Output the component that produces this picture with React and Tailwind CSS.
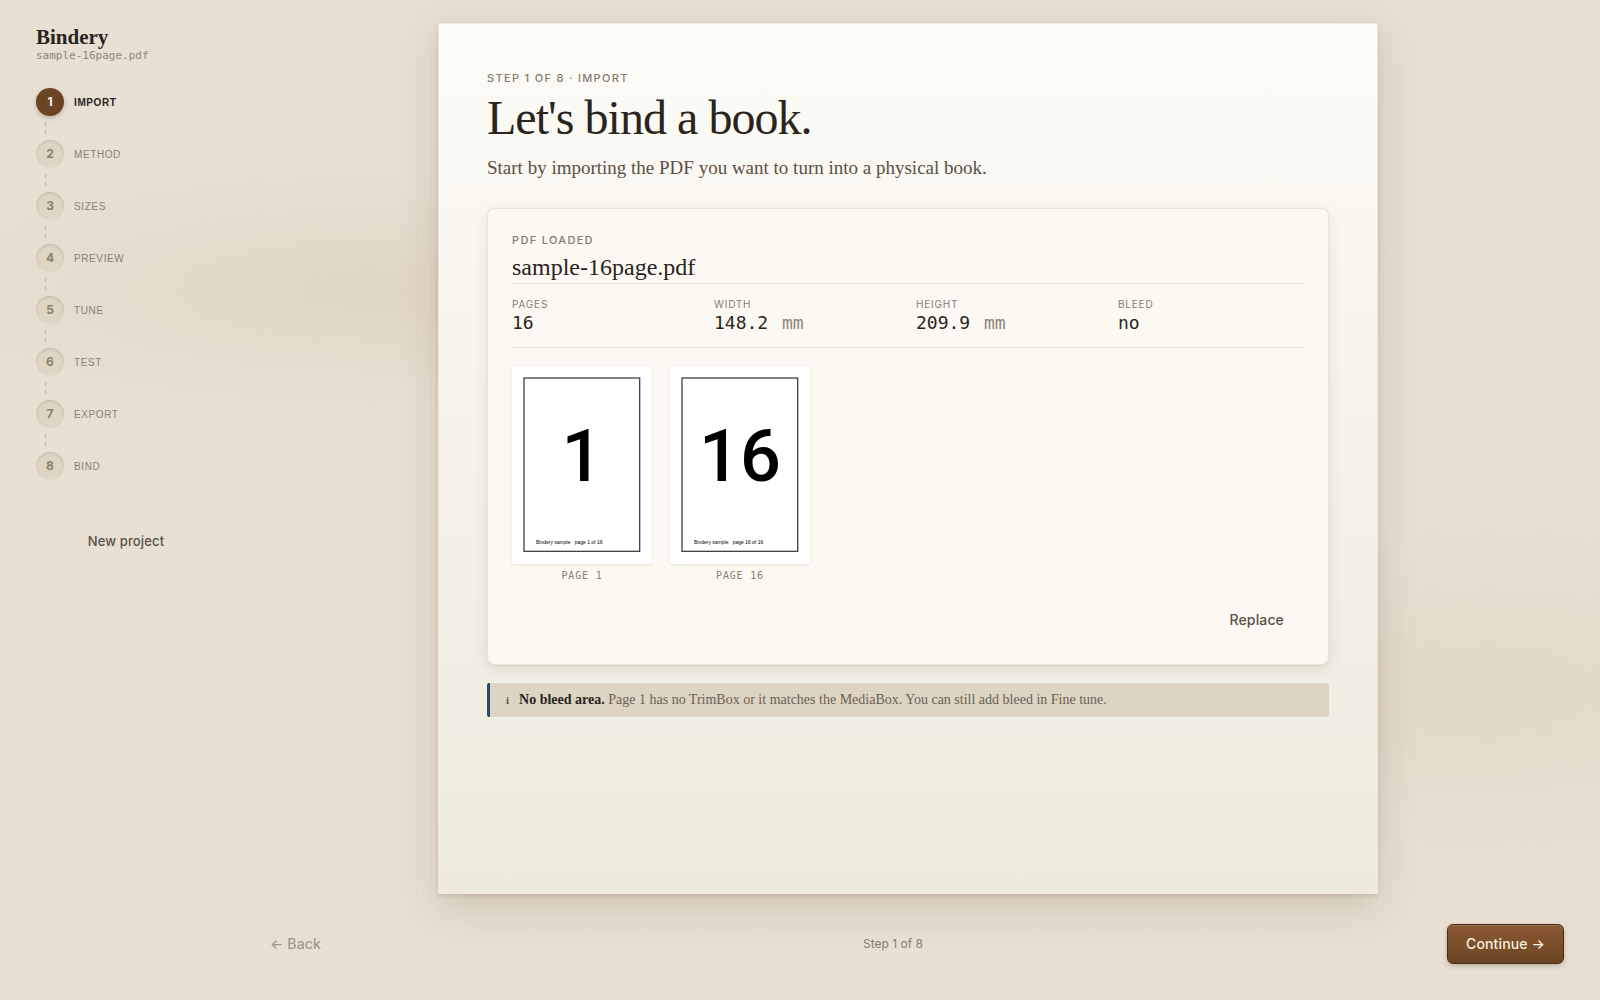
import { useState } from 'react';

const steps = ['Import', 'Method', 'Sizes', 'Preview', 'Tune', 'Test', 'Export', 'Bind'];

const project = {
  name: 'sample-16page.pdf',
  pages: 16,
};

const facts = [
  { label: 'Pages', value: '16' },
  { label: 'Width', value: '148.2', unit: 'mm' },
  { label: 'Height', value: '209.9', unit: 'mm' },
  { label: 'Bleed', value: 'no' },
];

function StepRail({ current, onSelect }) {
  return (
    <aside className="w-[216px] shrink-0 pl-9 pt-[26px]">
      <div className="font-['Liberation_Serif',serif] text-[21px] leading-[22px] font-bold text-[#2a241e]">Bindery</div>
      <div className="font-['DejaVu_Sans_Mono',monospace] text-[11px] leading-4 text-[#8f8678]">{project.name}</div>

      <ol className="mt-6 flex flex-col gap-[6px]">
        {steps.map((step, i) => {
          const active = i === current;
          return (
            <li key={step} className="flex flex-col gap-[6px]">
              {i > 0 && (
                <span className="ml-[9px] h-3 w-px bg-[repeating-linear-gradient(to_bottom,#c0b5a3_0_4px,transparent_4px_8px)]" />
              )}
              <button type="button" onClick={() => onSelect(i)} className="flex items-center gap-[10px] text-left">
                <span
                  className={`flex h-7 w-7 items-center justify-center rounded-full font-['Inter',sans-serif] text-xs font-bold ${
                    active
                      ? 'bg-[#6b4423] text-[#fcf8f0] shadow-[0_2px_4px_rgba(107,68,35,0.3)]'
                      : 'bg-[#ded5c4] text-[#8a8072] shadow-[inset_0_1px_3px_rgba(60,40,20,0.18),inset_0_-1px_1px_rgba(255,255,255,0.3)]'
                  }`}
                >
                  {i + 1}
                </span>
                <span
                  className={`font-['Liberation_Sans',sans-serif] text-[10px] tracking-[0.06em] uppercase ${
                    active ? 'font-bold text-[#2a241e]' : 'text-[#8a8072]'
                  }`}
                >
                  {step}
                </span>
              </button>
            </li>
          );
        })}
      </ol>

      <button
        type="button"
        className="mt-11 h-9 w-full font-['Inter',sans-serif] text-[13px] font-medium tracking-[0.01em] text-[#5a5046]"
      >
        New project
      </button>
    </aside>
  );
}

function PageThumb({ number }) {
  return (
    <figure className="w-[140px]">
      <svg viewBox="0 0 420 594" className="block w-full rounded-xs bg-white shadow-[0_1px_3px_rgba(60,40,20,0.1)]">
        <rect x="36" y="36" width="347" height="520" fill="none" stroke="#444" strokeWidth="4" />
        <text x="210" y="345" textAnchor="middle" fontSize="216" className="font-['Roboto',sans-serif] font-medium">
          {number}
        </text>
        <text x="72" y="533" fontSize="15" className="font-['Liberation_Sans',sans-serif]">
          Bindery sample &nbsp; page {number} of {project.pages}
        </text>
      </svg>
      <figcaption className="mt-1 text-center font-['DejaVu_Sans_Mono',monospace] text-[10px] leading-4 tracking-[0.08em] text-[#8a8072] uppercase">
        Page {number}
      </figcaption>
    </figure>
  );
}

function PdfCard() {
  return (
    <section className="rounded-lg border border-[#ece6da] bg-[#fcf9f2] p-6 shadow-[0_1px_2px_rgba(60,40,20,0.06),0_4px_14px_rgba(60,40,20,0.1)]">
      <p className="text-[11px] leading-[14px] font-medium tracking-[0.12em] text-[#857b6e] uppercase">Pdf loaded</p>
      <h2 className="mt-1 font-['Liberation_Serif',serif] text-2xl leading-8 text-[#2a241e]">{project.name}</h2>

      <dl className="grid grid-cols-4 gap-4 border-y border-[#e9e4d9] pt-3 pb-[13px]">
        {facts.map((fact) => (
          <div key={fact.label}>
            <dt className="text-[10px] leading-4 tracking-[0.08em] text-[#857b6e] uppercase">{fact.label}</dt>
            <dd className="font-['DejaVu_Sans_Mono',monospace] text-lg leading-[22px] whitespace-pre text-[#2a241e]">
              {fact.value}
              {fact.unit && <span className="ml-[3px] text-[#8f8678]"> {fact.unit}</span>}
            </dd>
          </div>
        ))}
      </dl>

      <div className="mt-[18px] flex gap-[18px]">
        <PageThumb number={1} />
        <PageThumb number={project.pages} />
      </div>

      <div className="mt-4 flex justify-end">
        <button type="button" className="h-10 px-5 text-sm font-medium tracking-[0.01em] text-[#5a5046]">
          Replace
        </button>
      </div>
    </section>
  );
}

export default function App() {
  const [current, setCurrent] = useState(0);

  return (
    <div className="relative isolate flex min-h-screen bg-[#e8e0d3] font-['Inter',sans-serif] text-[#2a241e]">
      {/* Desk surface: two soft glows under a fine vertical grain */}
      <div className="absolute inset-0 -z-10 bg-[repeating-linear-gradient(90deg,transparent_0_3px,rgba(110,80,50,0.012)_3px_5px,transparent_5px_7px),radial-gradient(ellipse_480px_120px_at_24%_29%,rgba(139,105,70,0.08),transparent),radial-gradient(ellipse_480px_170px_at_92%_69%,rgba(139,100,60,0.06),transparent)]" />

      <StepRail current={current} onSelect={setCurrent} />

      <div className="flex min-w-0 flex-1 flex-col">
        <main className="mx-auto mt-[23px] w-full max-w-[940px] flex-1 border border-[#f0ebe0] bg-linear-to-b from-[#fcfcf6] via-[#f6f2ea] to-[#edeadd] px-12 pt-[46px] pb-12 shadow-[0_2px_4px_rgba(60,40,20,0.12),0_12px_36px_rgba(80,50,25,0.17)]">
          <p className="text-[11px] leading-4 font-medium tracking-[0.12em] text-[#857b6e] uppercase">
            Step {current + 1} of {steps.length} · {steps[current]}
          </p>
          <h1 className="mt-1 font-['Liberation_Serif',serif] text-5xl leading-[56px] tracking-[-0.02em]">Let's bind a book.</h1>
          <p className="mt-2 mb-[26px] font-['Liberation_Serif',serif] text-[19px] leading-7 text-[#5a5046]">
            Start by importing the PDF you want to turn into a physical book.
          </p>

          <PdfCard />

          <div
            role="note"
            className="mt-[18px] flex items-center gap-[10px] rounded-xs border-l-3 border-[#2c4a68] bg-[#ddd4c4] px-4 py-[6px] font-['Liberation_Serif',serif] text-sm leading-[22px] text-[#6b6154]"
          >
            <span className="text-[11px] font-bold text-[#5a5046]">i</span>
            <p>
              <strong className="text-[#2a241e]">No bleed area.</strong> Page 1 has no TrimBox or it matches the MediaBox. You
              can still add bleed in Fine tune.
            </p>
          </div>
        </main>

        <footer className="flex items-center justify-between px-9 pt-[30px] pb-9">
          <button
            type="button"
            disabled={current === 0}
            onClick={() => setCurrent(current - 1)}
            className="h-10 px-[18px] text-sm font-medium tracking-[0.01em] text-[#5a5046] disabled:opacity-50"
          >
            ← Back
          </button>
          <span className="text-xs text-[#857b6e]">
            Step {current + 1} of {steps.length}
          </span>
          <button
            type="button"
            onClick={() => setCurrent(Math.min(current + 1, steps.length - 1))}
            className="h-10 rounded-md border border-[#4a2c14] bg-linear-to-b from-[#8a5a34] to-[#6b4423] px-[18px] text-sm font-medium tracking-[0.01em] text-[#fbeedd] shadow-[inset_0_1px_0_rgba(255,255,255,0.15),0_2px_5px_rgba(60,40,20,0.25)]"
          >
            Continue →
          </button>
        </footer>
      </div>
    </div>
  );
}
